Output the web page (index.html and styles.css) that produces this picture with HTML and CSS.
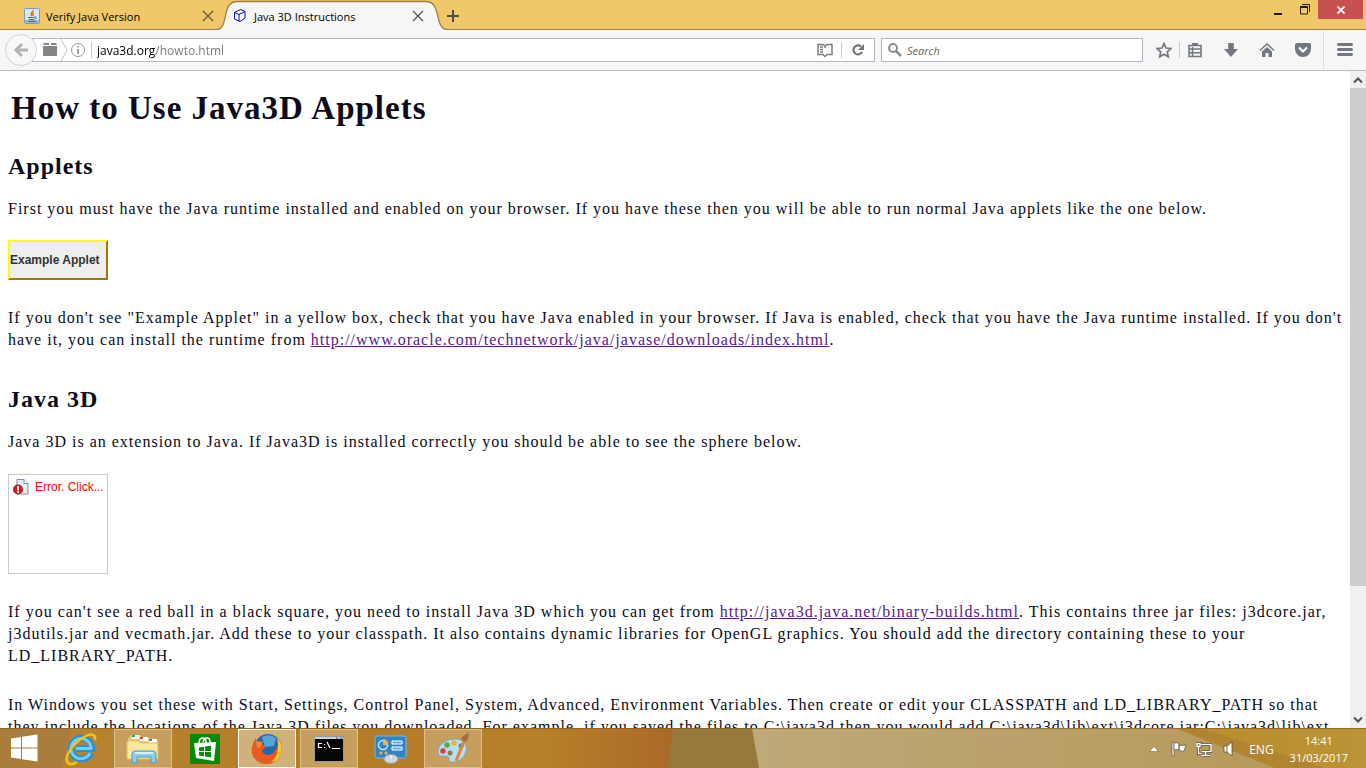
FILE: index.html
```html
<!DOCTYPE html>
<html lang="en">
<head>
<meta charset="utf-8">
<title>Java 3D Instructions</title>
<link rel="stylesheet" href="styles.css">
</head>
<body>
<header class="titlebar">
  <div class="tab">
    <svg class="favicon" width="16" height="16" viewBox="0 0 16 16"><rect x=".5" y=".5" width="15" height="15" rx="1" fill="#dce6ef" stroke="#7d9bb5"/><path d="M1 12h14v3H1z" fill="#9db6cb"/><path d="M9 2c1 2-4 3-1 6M10 5c-2 1-1 2-1 3" fill="none" stroke="#e8731a" stroke-width="1.5"/><path d="M4 9.500h6.500M5 11.500h5M4 13.500h8M10.500 9c3-.5 2 2 0 2" fill="none" stroke="#3f6d94"/></svg>
    <span class="tab-title">Verify Java Version</span>
    <button class="icon-button tab-close" aria-label="Close tab"><svg width="12" height="12" viewBox="0 0 12 12"><path d="M1 1l10 10M11 1L1 11" stroke="#66583c" stroke-width="1.300"/></svg></button>
  </div>
  <div class="tab tab-active">
    <svg class="tab-shape" viewBox="0 0 230 30" preserveAspectRatio="none"><path d="M0 29.500C12 29 4 2 20 2H209C225 2 217 29 230 29.500V30H0z" fill="#f6f6f6"/><path d="M0 29.500C12 29 4 1.500 20 1.500H209C225 1.500 217 29 230 29.500" fill="none" stroke="#9b8148" stroke-width="1.300"/></svg>
    <svg class="favicon" width="16" height="16" viewBox="0 0 16 16"><path d="M2.500 4.500L8.500 1.500L13 3.500V10L8 13.500L2.500 11zM2.500 4.500L7 6.500L13 3.500M7 6.500V13" fill="#fff" stroke="#0000e0"/></svg>
    <span class="tab-title">Java 3D Instructions</span>
    <button class="icon-button tab-close" aria-label="Close tab"><svg width="12" height="12" viewBox="0 0 12 12"><path d="M1 1l10 10M11 1L1 11" stroke="#555" stroke-width="1.300"/></svg></button>
  </div>
  <button class="icon-button new-tab" aria-label="New tab"><svg width="12" height="12" viewBox="0 0 12 12"><path d="M6 0v12M0 6h12" stroke="#4c4c4c" stroke-width="2"/></svg></button>
  <div class="window-controls">
    <button class="icon-button" aria-label="Minimize"><svg width="12" height="12" viewBox="0 0 12 12"><path d="M2 9h8v2H2z" fill="#1e1e1e"/></svg></button>
    <button class="icon-button" aria-label="Restore"><svg width="12" height="12" viewBox="0 0 12 12"><path d="M3 .5h7.500V8M1.500 3h7v7h-7z" fill="none" stroke="#1e1e1e"/><path d="M1 2h8v2H1z" fill="#1e1e1e"/></svg></button>
    <button class="icon-button window-close" aria-label="Close"><svg width="8" height="8" viewBox="0 0 8 8"><path d="M.5.5l7 7M7.500.5l-7 7" stroke="#fff" stroke-width="1.800"/></svg></button>
  </div>
</header>

<nav class="toolbar" aria-label="Navigation">
  <button class="icon-button back" aria-label="Back"><svg width="16" height="16" viewBox="0 0 16 16"><path d="M9 2L3 8l6 6M3.500 8H15" fill="none" stroke="#b4b4b4" stroke-width="3"/></svg></button>
  <div class="urlbar">
    <svg width="16" height="16" viewBox="0 0 16 16"><path d="M1 4h14v10H1zM1.500 1H7v2H1.500zM9 1h5.500v2H9z" fill="#858585"/></svg>
    <svg class="crumb" width="8" height="22" viewBox="0 0 8 22"><path d="M1 0l6 11-6 11" fill="none" stroke="#c2c2c2"/></svg>
    <label for="url" aria-label="Address"><svg width="16" height="16" viewBox="0 0 16 16"><circle cx="8" cy="8" r="6.500" fill="none" stroke="#999"/><path d="M7.200 4h1.600v1.600H7.200zM7.200 7h1.600v5H7.200z" fill="#888"/></svg></label>
    <span class="divider"></span>
    <input id="url" class="field url-field" type="text" value="java3d.org/howto.html">
    <button class="icon-button" aria-label="Reader view"><svg width="16" height="16" viewBox="0 0 16 16"><path d="M1 2.500h5l2 1.500 2-1.500h5v10h-5l-2 2-2-2H1zM8 4v2M3 5h3M3 7.500h3M3 10h3" fill="none" stroke="#7d7d7d" stroke-width="1.500"/></svg></button>
    <span class="divider divider-wide"></span>
    <button class="icon-button" aria-label="Reload"><svg width="16" height="16" viewBox="0 0 16 16"><path d="M11 4.500a4.500 4.500 0 1 0 1 5.500" fill="none" stroke="#777" stroke-width="2.200"/><path d="M14 2v6H8z" fill="#777"/></svg></button>
  </div>
  <div class="searchbar">
    <label for="search" aria-label="Search"><svg width="16" height="16" viewBox="0 0 16 16"><circle cx="6" cy="6" r="4" fill="none" stroke="#8c8c8c" stroke-width="2"/><path d="M9 9l5 5" stroke="#8c8c8c" stroke-width="2.500"/></svg></label>
    <input id="search" class="field search-field" type="search" placeholder="Search">
  </div>
  <div class="tools">
    <button class="icon-button" aria-label="Bookmark"><svg width="16" height="16" viewBox="0 0 16 16"><path d="M8 1.500l2 4.500 5 .5-3.700 3.300 1 5L8 12.200 3.700 14.800l1-5L1 6.500 6 6z" fill="none" stroke="#737780" stroke-width="1.700"/></svg></button>
    <span class="divider"></span>
    <button class="icon-button" aria-label="Bookmarks list"><svg width="16" height="16" viewBox="0 0 16 16"><path d="M2 3.500h12v11H2zM2 7h12M2 10.700h12M5.500 5v9" fill="none" stroke="#737780" stroke-width="1.600"/><path d="M5 1h6v3H5z" fill="#737780"/></svg></button>
    <button class="icon-button" aria-label="Downloads"><svg width="16" height="16" viewBox="0 0 16 16"><path d="M5.200 1h5.600v6H15l-7 8-7-8h4.200z" fill="#737780"/></svg></button>
    <button class="icon-button" aria-label="Home"><svg width="16" height="16" viewBox="0 0 16 16"><path d="M1 8.500L8 2l7 6.500" fill="none" stroke="#737780" stroke-width="1.500"/><path d="M8 5l5 4.500V15H9.500v-4h-3v4H3V9.500z" fill="#737780"/></svg></button>
    <button class="icon-button" aria-label="Pocket"><svg width="16" height="16" viewBox="0 0 16 16"><path d="M2 1h12q2 0 2 2v4a8 8 0 0 1-16 0V3q0-2 2-2z" fill="#737780"/><path d="M4 5.500l4 4 4-4" fill="none" stroke="#fff" stroke-width="2.200"/></svg></button>
  </div>
  <button class="icon-button menu" aria-label="Menu"><svg width="16" height="16" viewBox="0 0 16 16"><path d="M1.500 2.500h13M1.500 7.500h13M1.500 12.500h13" stroke="#737780" stroke-width="3" stroke-linecap="round"/></svg></button>
</nav>

<div class="viewport">
  <main class="page">
    <h1>How to Use Java3D Applets</h1>
    <h2>Applets</h2>
    <p>First you must have the Java runtime installed and enabled on your browser. If you have these then you will be able to run normal Java applets like the one below.</p>
    <div class="applet">Example Applet</div>
    <p>If you don't see "Example Applet" in a yellow box, check that you have Java enabled in your browser. If Java is enabled, check that you have the Java runtime installed. If you don't have it, you can install the runtime from <a href="#oracle">http://www.oracle.com/technetwork/java/javase/downloads/index.html</a>.</p>
    <h2 class="section">Java 3D</h2>
    <p>Java 3D is an extension to Java. If Java3D is installed correctly you should be able to see the sphere below.</p>
    <div class="applet-error">
      <svg width="16" height="16" viewBox="0 0 16 16"><path d="M4 .5h7l4 4V15H4z" fill="#e4edf4" stroke="#7890a8"/><path d="M11 .5v4h4" fill="#fff" stroke="#7890a8"/><circle cx="5" cy="10.500" r="5" fill="#c91c22"/><path d="M4.200 7h1.800v4.500H4.200zM4.200 12.300h1.800V14H4.200z" fill="#fff"/></svg>
      <span>Error. Click...</span>
    </div>
    <p>If you can't see a red ball in a black square, you need to install Java 3D which you can get from <a href="#builds">http://java3d.java.net/binary-builds.html</a>. This contains three jar files: j3dcore.jar, j3dutils.jar and vecmath.jar. Add these to your classpath. It also contains dynamic libraries for OpenGL graphics. You should add the directory containing these to your LD_LIBRARY_PATH.</p>
    <p>In Windows you set these with Start, Settings, Control Panel, System, Advanced, Environment Variables. Then create or edit your CLASSPATH and LD_LIBRARY_PATH so that they include the locations of the Java 3D files you downloaded. For example, if you saved the files to C:\java3d then you would add C:\java3d\lib\ext\j3dcore.jar;C:\java3d\lib\ext</p>
  </main>
  <div class="scrollbar" aria-hidden="true">
    <svg width="16" height="17" viewBox="0 0 16 17"><path d="M4 11.500l4-4 4 4" fill="none" stroke="#505050" stroke-width="2"/></svg>
    <div class="track"><div class="thumb"></div></div>
    <svg width="16" height="17" viewBox="0 0 16 17"><path d="M4 6.500l4 4 4-4" fill="none" stroke="#505050" stroke-width="2"/></svg>
  </div>
</div>

<footer class="taskbar">
  <svg class="wallpaper" viewBox="0 0 1366 40" preserveAspectRatio="none" aria-hidden="true">
    <defs>
      <linearGradient id="amber"><stop offset="0" stop-color="#b88532"/><stop offset=".5" stop-color="#b37c29"/><stop offset=".8" stop-color="#b78029"/><stop offset="1" stop-color="#aa6828"/></linearGradient>
      <linearGradient id="tan"><stop offset="0" stop-color="#bea979"/><stop offset="1" stop-color="#b69655"/></linearGradient>
      <linearGradient id="gold"><stop offset="0" stop-color="#b98c2c"/><stop offset="1" stop-color="#bb9338"/></linearGradient>
    </defs>
    <path d="M0 0H680V40H0z" fill="url(#amber)"/>
    <path d="M0 0H72L62 40H0z" fill="#aa7d3c"/>
    <path d="M673 0H760V40H668z" fill="#98793b"/>
    <path d="M752 0H1366V40H759z" fill="url(#tan)"/>
    <path d="M1175 0H1366V40H1290z" fill="url(#gold)"/>
    <path d="M1175 0H1200L1325 40H1275z" fill="#b18431"/>
    <path d="M0 .5H1366" stroke="#79571d" stroke-opacity=".6"/>
  </svg>
  <div class="tasks">
    <button class="icon-button start" aria-label="Start"><svg width="28" height="28" viewBox="0 0 28 28"><path d="M1 4.500l10-1.500v10.500H1zM12 2.800L27.500.5v13H12zM1 14.500h10V25L1 23.500zM12 14.500h15.500v13L12 25.200z" fill="#fff"/></svg></button>
    <button class="icon-button task" aria-label="Internet Explorer"><svg width="34" height="34" viewBox="0 0 34 34"><path d="M27 21A10.500 10.500 0 1 1 28 16.500H12" fill="none" stroke="#2a8fd0" stroke-width="6.500"/><path d="M26 21A10 10 0 1 1 27 16.500H12" fill="none" stroke="#6ed0f4" stroke-width="3"/><path d="M4 31C-1 26 9 11 20 5c7-4 12-3 11 3M4 31c2 2 6 1 9-1" fill="none" stroke="#f5c21b" stroke-width="2.500"/></svg></button>
    <button class="icon-button task open" aria-label="File Explorer"><svg width="34" height="34" viewBox="0 0 34 34"><path d="M2 7l3-4h9l2 3h8l2 3h6v17H2z" fill="#e8cf75"/><path d="M6 3h7v4H6zM14 5h8v4h-8zM23 7h8v4h-8z" fill="#fff"/><path d="M6 3h3v2H6z" fill="#1faa4b"/><path d="M14 5h3v2h-3z" fill="#d64b35"/><path d="M23 7h3v2h-3z" fill="#2c8bd0"/><path d="M1 9h12l2 2h17v16H1z" fill="#f8e8a0" stroke="#d8bd62"/><path d="M6 31V22q0-3 3-3h18q3 0 3 3v9h-5v-6H11v6z" fill="#8fcbe8" stroke="#559bc0"/><path d="M9 21h18" stroke="#d7f2fc" stroke-width="2"/></svg></button>
    <button class="icon-button task" aria-label="Store"><svg width="30" height="30" viewBox="0 0 30 30"><path d="M0 0h30v30H0z" fill="#078a08"/><path d="M4 9l22-1-2 19L6 24z" fill="#fff"/><path d="M9 9q0-5 4-5 3 0 3 5M13 8q1-4 4-4 3 0 3 4" fill="none" stroke="#fff" stroke-width="1.500"/><path d="M9 13.500l5-.7V17H9zM15 12.600l6-.8V17h-6zM9 18h5v4.200l-5-.7zM15 18h6v5.200l-6-.8z" fill="#078a08"/></svg></button>
    <button class="icon-button task open current" aria-label="Firefox"><svg width="32" height="32" viewBox="0 0 32 32"><circle cx="17" cy="14" r="13" fill="#2567a8"/><path d="M11 4q8-4 14 1l-2 8-9 1z" fill="#53a6d6"/><path d="M25 4c7 6 8 15 2 22S10 33 4 26 1 11 5 5l1 4 5-1c1 1 1 3 0 4l4 1c-1 3-4 3-4 5 1 5 9 5 12 1 5-5 4-10 2-15z" fill="#e75b20"/><path d="M26 5c6 6 6 15 1 21-2 2-5 3-7 3 6-4 9-14 6-24z" fill="#f9c92d"/><path d="M5 8l5 1c2 2 0 4 0 5l-4 1z" fill="#f28a28"/></svg></button>
    <button class="icon-button task open" aria-label="Command Prompt"><svg width="30" height="26" viewBox="0 0 30 26"><path d="M.5.500h29v25H.5z" fill="#060606" stroke="#999"/><path d="M1 1h28v2H1z" fill="#c8d0dc"/><path d="M22 1.500h2v1h-2zM26 1.500h2v1h-2z" fill="#405570"/><path d="M8 7.500H4.500v4H8M10.500 8v1M10.500 11v1M13 6l3 6M18 12.500h8" fill="none" stroke="#fff" stroke-width="1.200"/></svg></button>
    <button class="icon-button task" aria-label="Control Panel"><svg width="34" height="32" viewBox="0 0 34 32"><rect x="1" y="3" width="31" height="22" rx="2" fill="#2f85c8" stroke="#75b8e6"/><circle cx="9" cy="12" r="4.500" fill="none" stroke="#c4e5fb" stroke-width="1.500"/><path d="M9 6a5 5 0 0 1 5 6H9z" fill="#f6b43b"/><path d="M18 8h10v3H18zM18 14h10v3H18z" fill="#58aae0" stroke="#fff"/><circle cx="7" cy="20" r="1.500" fill="#f6b43b"/><circle cx="12" cy="20" r="1.500" fill="#f6b43b"/><ellipse cx="17" cy="26" rx="7" ry="4.500" fill="#d2d6da" stroke="#969ca1"/><path d="M17 22v4" stroke="#fff"/></svg></button>
    <button class="icon-button task open" aria-label="Paint"><svg width="34" height="34" viewBox="0 0 34 34"><path d="M17 7c10-1 15 6 13 12-2 8-9 12-14 11-5 0-1-5-5-6-4 0-8 1-9-3C1 14 8 8 17 7z" fill="#b6ddf0" stroke="#78a8c4"/><circle cx="7" cy="19" r="2.700" fill="#df3b38"/><circle cx="11" cy="13" r="2.700" fill="#58ad3f"/><circle cx="18" cy="11" r="2.700" fill="#efb62d"/><circle cx="25" cy="14" r="2.500" fill="#4187ce"/><circle cx="14" cy="21" r="2.500" fill="#9b7542"/><path d="M29 7L20 29" stroke="#df852f" stroke-width="3"/><path d="M25 7c1-4 5-3 7-7 1 4 1 8-3 10z" fill="#aa6c3a"/></svg></button>
  </div>
  <div class="tray">
    <button class="icon-button" aria-label="Show hidden icons"><svg width="16" height="16" viewBox="0 0 16 16"><path d="M3.500 10.500L8 5.500l4.500 5z" fill="#fff" stroke="#6d562b" stroke-width=".5"/></svg></button>
    <button class="icon-button" aria-label="Action Center"><svg width="16" height="16" viewBox="0 0 16 16"><path d="M1 1h2v14H1z" fill="#fff" stroke="#493c23" stroke-width=".6"/><path d="M3 2q3-1 5 1v6Q6 8 3 9zM8 4q3 1 7 0l-2 6q-2 1-5-1z" fill="#fff" stroke="#493c23" stroke-width=".6"/></svg></button>
    <button class="icon-button" aria-label="Network"><svg width="16" height="16" viewBox="0 0 16 16"><path d="M5 3.500h10v7H6M9.500 11v3M6 14.500h8M1 2.500h3v3H1zM2.500 6v6.500H5" fill="none" stroke="#493c23" stroke-width="3"/><path d="M5 3.500h10v7H6M9.500 11v3M6 14.500h8M1 2.500h3v3H1zM2.500 6v6.500H5" fill="none" stroke="#fff" stroke-width="1.500"/></svg></button>
    <button class="icon-button" aria-label="Volume"><svg width="16" height="16" viewBox="0 0 16 16"><path d="M3 5h3l5-4v14l-5-4H3z" fill="#fff" stroke="#493c23" stroke-width=".7"/><path d="M6 5v6" stroke="#8d7039"/></svg></button>
    <button class="icon-button language">ENG</button>
    <time class="clock" datetime="2017-03-31T14:41">14:41<br>31/03/2017</time>
  </div>
</footer>
</body>
</html>
```
FILE: styles.css
```css
* { box-sizing: border-box; }

body {
  margin: 0;
  height: 100vh;
  display: flex;
  flex-direction: column;
  overflow: hidden;
  background: #fff;
  font-family: "Open Sans", "Noto Sans", sans-serif;
  font-size: 11px;
  color: #000;
}

svg { display: block; flex: none; }

.icon-button {
  display: flex;
  align-items: center;
  justify-content: center;
  flex: none;
  margin: 0;
  padding: 0;
  border: 0;
  background: none;
  color: inherit;
  font: inherit;
}

/* Title bar */
.titlebar {
  display: flex;
  height: 30px;
  flex: none;
  background: #f0c86a;
  border-bottom: 1px solid #9b8148;
}

.tab {
  position: relative;
  display: flex;
  align-items: center;
  width: 217px;
  height: 30px;
  padding: 2px 3px 0 24px;
}

.tab-active {
  width: 230px;
  padding: 2px 23px 0 15px;
}

.tab-shape {
  position: absolute;
  inset: 0;
  width: 100%;
  height: 100%;
}

.favicon, .tab-title, .tab-close { position: relative; }
.tab-title { flex: 1; margin-left: 6px; white-space: nowrap; }
.new-tab { width: 12px; padding-top: 2px; }
.window-controls { display: flex; margin-left: auto; padding-right: 3px; height: 19px; }
.window-controls button { width: 27px; }
.window-controls .window-close { width: 45px; background: #c75050; }

/* Navigation bar */
.toolbar {
  display: flex;
  align-items: center;
  height: 41px;
  flex: none;
  padding-left: 5px;
  background: #f6f6f6;
  border-bottom: 1px solid #bcbcbc;
}

.back {
  position: relative;
  z-index: 1;
  width: 32px;
  height: 32px;
  border: 1px solid #cfd1d6;
  border-radius: 50%;
  background: #f8f8f8;
}

.urlbar, .searchbar {
  display: flex;
  align-items: center;
  height: 24px;
  border: 1px solid #b1b9c6;
  background: #fff;
}

.urlbar { flex: 1; margin-left: -5px; padding: 0 8px 0 9px; }
.crumb { margin: 0 2px; }
.divider { width: 1px; height: 16px; flex: none; background: #c8c8c8; }
.urlbar .divider { margin: 0 5px; }
.urlbar .divider-wide { margin: 0 8px; }

.field {
  flex: 1;
  min-width: 0;
  height: 22px;
  padding: 0;
  border: 0;
  outline: 0;
  background: none;
  font: inherit;
}

/* The host is black and the path is grey */
.url-field {
  background: linear-gradient(90deg, #000 59px, #777 59px);
  background-clip: text;
  -webkit-background-clip: text;
  color: transparent;
  font-size: 12px;
}

.searchbar { width: 262px; margin-left: 6px; padding: 0 5px; gap: 4px; }
.search-field::placeholder { color: #666; font-style: italic; opacity: 1; }
.tools { display: flex; align-items: center; gap: 20px; padding: 0 12px 0 13px; }
.tools .divider { margin: 0 -13px; }
.menu { width: 43px; height: 38px; border-left: 1px solid #dcdcdc; }

/* Web page */
.viewport { display: flex; flex: 1; min-height: 0; }

.page {
  flex: 1;
  min-width: 0;
  overflow: hidden;
  padding: 0 0 0 8px;
  color: #0b0b1c;
  font-family: "Liberation Serif", "Times New Roman", serif;
  font-size: 16px;
  line-height: 22px;
  letter-spacing: 1px;
}

.page h1 { margin: 15px 0 0 3px; font-size: 33px; line-height: 44px; }
.page h2 { margin: 19px 0 0; font-size: 24px; line-height: 34px; }
.page .section { margin-top: 31px; }
.page p { margin: 27px 0; }
.page h2 + p { margin: 15px 0 21px; }
.page h2 + p + .applet { margin-top: -1px; }
.page a { color: #551a8b; }

.applet {
  display: flex;
  align-items: center;
  width: 100px;
  height: 40px;
  border: 2px solid;
  border-color: #ff0 #a07800 #a07800 #ff0;
  background: #eee;
  color: #333;
  font: bold 12px "Liberation Sans", Arial, sans-serif;
  letter-spacing: normal;
}

.applet-error {
  display: flex;
  gap: 6px;
  width: 100px;
  height: 100px;
  padding: 4px 0 0 4px;
  border: 1px solid #c8c8c8;
  color: #f00;
  font: 12px/16px "Liberation Sans", Arial, sans-serif;
  letter-spacing: normal;
}

.scrollbar { display: flex; flex-direction: column; width: 16px; background: #f0f0f0; }
.track { flex: 1; }
.thumb { height: 80%; background: #cdcdcd; }

/* Task bar */
.taskbar {
  position: relative;
  display: flex;
  justify-content: space-between;
  height: 40px;
  flex: none;
  color: #fff;
}

.wallpaper { position: absolute; inset: 0; width: 100%; height: 100%; }
.tasks, .tray { position: relative; display: flex; }
.tasks { gap: 4px; }
.start { width: 48px; }
.task { width: 58px; height: 39px; margin-top: 1px; border: 1px solid transparent; }
.task.open { border-color: #dcc08d; background: #c69e5d; }
.task.current { border-color: #fff; background: #d0b17a; }
.tray { align-items: center; gap: 9px; padding: 2px 18px 0 0; }
.language { font-size: 12px; margin: 0 7px 0 3px; }
.clock { line-height: 17px; text-align: center; }
```
